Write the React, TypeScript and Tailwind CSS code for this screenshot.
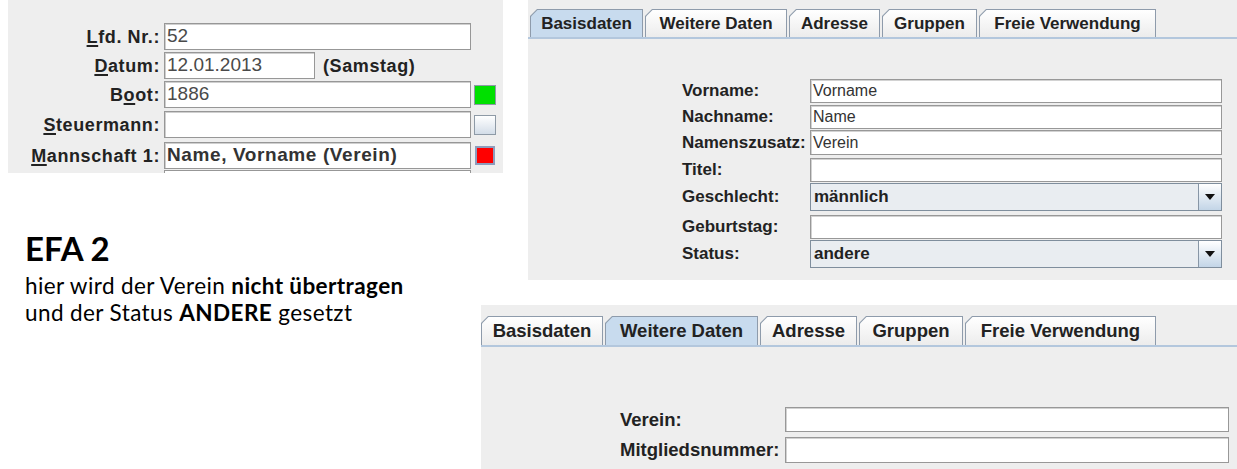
import React from "react";

const java = { fontFamily: '"Liberation Sans", Arial, sans-serif' };
const office = { fontFamily: 'Lato, "Open Sans", sans-serif' };

function U({ c }: { c: string }) {
  return <span className="underline underline-offset-[2px] decoration-[1.5px]">{c}</span>;
}

function Field1({ w, children, bold }: { w: string; children?: React.ReactNode; bold?: boolean }) {
  return (
    <div
      className={`${w} h-[27px] bg-white border border-[#979797] shadow-[inset_1px_1px_0_#cfcfcf] flex items-center pl-[2px] text-[19px] ${
        bold ? "font-bold text-[#333] tracking-[0.6px] text-[18px]" : "text-[#4a4a4a]"
      }`}
    >
      {children}
    </div>
  );
}

function Row1({ label, children }: { label: React.ReactNode; children: React.ReactNode }) {
  return (
    <div className="flex items-center h-[27px]">
      <div className="w-[152px] text-right font-bold text-[18px] tracking-[0.6px] text-[#222] whitespace-nowrap pt-[2px]">
        {label}
      </div>
      <div className="ml-[4px] flex items-center">{children}</div>
    </div>
  );
}

function Panel1() {
  return (
    <div className="ml-[8px] w-[495px] h-[173px] bg-[#eeeeee] overflow-hidden pt-[23px] shrink-0" style={java}>
      <div className="flex flex-col">
        <Row1 label={<><U c="L" />fd. Nr.:</>}>
          <Field1 w="w-[307px]">52</Field1>
        </Row1>
        <div className="mt-[2px]">
          <Row1 label={<><U c="D" />atum:</>}>
            <Field1 w="w-[151px]">12.01.2013</Field1>
            <span className="ml-[8px] font-bold text-[18px] tracking-[0.6px] text-[#222] pt-[2px]">(Samstag)</span>
          </Row1>
        </div>
        <div className="mt-[2px]">
          <Row1 label={<>B<U c="o" />ot:</>}>
            <Field1 w="w-[307px]">1886</Field1>
            <div className="ml-[3px] w-[22px] h-[20px] border border-[#8e9aa6] bg-[#00e000]" />
          </Row1>
        </div>
        <div className="mt-[3px]">
          <Row1 label={<><U c="S" />teuermann:</>}>
            <Field1 w="w-[307px]" />
            <div className="ml-[3px] w-[22px] h-[20px] border border-[#8e9aa6] bg-gradient-to-b from-[#ffffff] to-[#d3dde8]" />
          </Row1>
        </div>
        <div className="mt-[4px]">
          <Row1 label={<><U c="M" />annschaft 1:</>}>
            <Field1 w="w-[307px]" bold>
              Name, Vorname (Verein)
            </Field1>
            <div className="ml-[4px] w-[20px] h-[19px] border-2 border-[#8d9cbc] bg-[#ff0000]" />
          </Row1>
        </div>
        <div className="mt-[1px] ml-[156px] w-[307px] h-[27px] bg-white border border-[#979797]" />
      </div>
    </div>
  );
}

function Tab({ label, w, selected, size }: { label: string; w: string; selected?: boolean; size: string }) {
  return (
    <div
      className={`${w} h-full bg-[#8e9bab] pt-[1px] px-[1px]`}
      style={{ clipPath: "polygon(7px 0, 100% 0, 100% 100%, 0 100%, 0 7px)" }}
    >
      <div
        className={`h-full flex items-center justify-center font-bold ${size} text-[#222] ${
          selected ? "bg-[#c8dbee]" : "bg-gradient-to-b from-[#ffffff] to-[#ececec]"
        }`}
        style={{ clipPath: "polygon(6.5px 0, 100% 0, 100% 100%, 0 100%, 0 6.5px)" }}
      >
        {label}
      </div>
    </div>
  );
}

function Input2({ h, children }: { h: string; children?: React.ReactNode }) {
  return (
    <div className={`flex-1 ${h} bg-white border border-[#989898] shadow-[inset_1px_1px_0_#d2d2d2] flex items-center pl-[2px] text-[16px] text-[#333]`}>
      {children}
    </div>
  );
}

function Combo({ children }: { children: React.ReactNode }) {
  return (
    <div className="flex-1 h-[28px] border border-[#7f8e9d] bg-[#e9edf1] flex">
      <div className="flex-1 flex items-center pl-[3px] font-bold text-[17px] text-[#222]">{children}</div>
      <div className="w-[23px] border-l border-[#8796a6] bg-gradient-to-b from-[#ffffff] to-[#c3d5e7] flex items-center justify-center">
        <svg width="10" height="6" viewBox="0 0 10 6">
          <polygon points="0,0 10,0 5,6" fill="#111" />
        </svg>
      </div>
    </div>
  );
}

function Row2({ label, rh, children }: { label: string; rh: string; children: React.ReactNode }) {
  return (
    <div className={`flex items-start ${rh}`}>
      <div className="flex items-center w-full">
        <div className="w-[128px] font-bold text-[17px] text-[#222] whitespace-nowrap">{label}</div>
        {children}
      </div>
    </div>
  );
}

function Panel2() {
  return (
    <div className="ml-[25px] flex-1 h-[280px] bg-[#eeeeee] pt-[9px]" style={java}>
      <div className="flex gap-[2px] h-[28px] pl-[2px]">
        <Tab label="Basisdaten" w="w-[113px]" selected size="text-[17px]" />
        <Tab label="Weitere Daten" w="w-[142px]" size="text-[17px]" />
        <Tab label="Adresse" w="w-[91px]" size="text-[17px]" />
        <Tab label="Gruppen" w="w-[95px]" size="text-[17px]" />
        <Tab label="Freie Verwendung" w="w-[177px]" size="text-[17px]" />
      </div>
      <div className="h-[2px] bg-[#b3c7dd]" />
      <div className="pl-[154px] pr-[15px] pt-[39px] flex flex-col">
        <Row2 label="Vorname:" rh="h-[26px]">
          <Input2 h="h-[24px]">Vorname</Input2>
        </Row2>
        <Row2 label="Nachname:" rh="h-[26px]">
          <Input2 h="h-[24px]">Name</Input2>
        </Row2>
        <Row2 label="Namenszusatz:" rh="h-[27px]">
          <Input2 h="h-[25px]">Verein</Input2>
        </Row2>
        <Row2 label="Titel:" rh="h-[26px]">
          <Input2 h="h-[24px]" />
        </Row2>
        <Row2 label="Geschlecht:" rh="h-[31px]">
          <Combo>männlich</Combo>
        </Row2>
        <Row2 label="Geburtstag:" rh="h-[26px]">
          <Input2 h="h-[24px]" />
        </Row2>
        <Row2 label="Status:" rh="h-[28px]">
          <Combo>andere</Combo>
        </Row2>
      </div>
    </div>
  );
}

function Row3({ label, h, mt }: { label: string; h: string; mt?: string }) {
  return (
    <div className={`flex items-center ${mt ?? ""}`}>
      <div className="w-[165px] font-bold text-[18.5px] text-[#222] whitespace-nowrap">{label}</div>
      <div className={`flex-1 ${h} bg-white border border-[#989898] shadow-[inset_1px_1px_0_#d2d2d2]`} />
    </div>
  );
}

function Panel3() {
  return (
    <div className="flex-1 mt-[73px] h-[164px] bg-[#eeeeee] pt-[11px]" style={java}>
      <div className="flex gap-[2px] h-[29px]">
        <Tab label="Basisdaten" w="w-[122px]" size="text-[18.5px]" />
        <Tab label="Weitere Daten" w="w-[153px]" selected size="text-[18.5px]" />
        <Tab label="Adresse" w="w-[97px]" size="text-[18.5px]" />
        <Tab label="Gruppen" w="w-[104px]" size="text-[18.5px]" />
        <Tab label="Freie Verwendung" w="w-[191px]" size="text-[18.5px]" />
      </div>
      <div className="h-[2px] bg-[#b3c7dd]" />
      <div className="pl-[139px] pr-[8px] pt-[59px] flex flex-col">
        <Row3 label="Verein:" h="h-[25px]" />
        <Row3 label="Mitgliedsnummer:" h="h-[26px]" mt="mt-[2px]" />
      </div>
    </div>
  );
}

export default function App() {
  return (
    <div className="w-[1237px] h-[469px] bg-white overflow-hidden">
      <div className="flex items-start">
        <Panel1 />
        <Panel2 />
      </div>
      <div className="flex items-start mt-[-48px]">
        <div className="w-[481px] pl-[25px] text-black shrink-0" style={office}>
          <div className="font-bold text-[33px] leading-[32px]">EFA 2</div>
          <div className="text-[22.5px] tracking-[0.4px] leading-[27px] mt-[8px] whitespace-nowrap">
            hier wird der Verein <span className="font-bold">nicht übertragen</span>
          </div>
          <div className="text-[22.5px] tracking-[0.4px] leading-[27px] whitespace-nowrap">
            und der Status <span className="font-bold">ANDERE</span> gesetzt
          </div>
        </div>
        <Panel3 />
      </div>
    </div>
  );
}
